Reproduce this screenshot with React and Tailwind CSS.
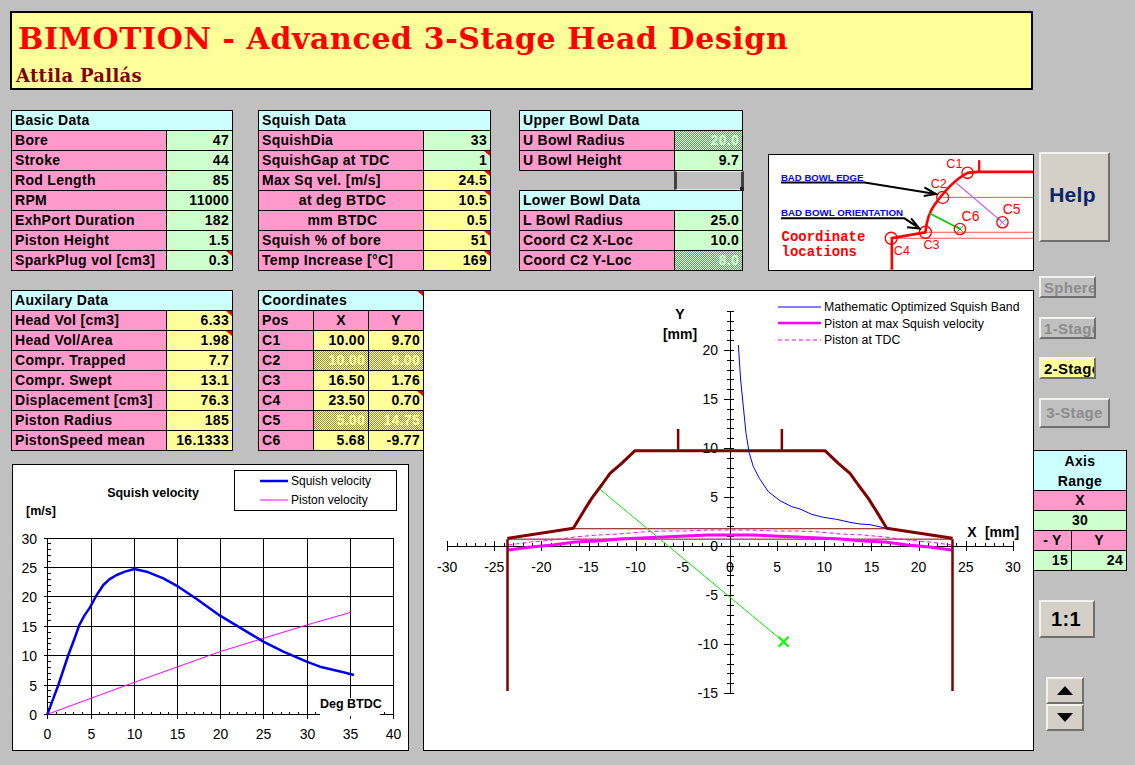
import React from 'react';

const PINK = 'bg-[#ff99cc]';
const GREEN = 'bg-[#ccffcc]';
const YELLOW = 'bg-[#ffff99]';
const DOT_GREEN = 'bg-[repeating-conic-gradient(#6f8f6f_0_25%,#ccffcc_0_50%)] bg-[length:2px_2px] text-[#ccffcc]';
const DOT_YELLOW = 'bg-[repeating-conic-gradient(#8f8f55_0_25%,#ffff99_0_50%)] bg-[length:2px_2px] text-[#ffff99]';
const BEVEL = 'border-2 border-t-[#f4f2ec] border-l-[#f4f2ec] border-b-[#707070] border-r-[#707070]';

// red comment marker in the corner of a cell
function Note() {
  return <span className="absolute top-0 right-0 w-0 h-0 border-l-[6px] border-l-transparent border-t-[5px] border-t-[#ff0000]" />;
}

function Title({ children, note }) {
  return (
    <div className="relative h-5 border-b border-black bg-[#ccffff] pl-[3px] leading-[19px]">
      {children}
      {note && <Note />}
    </div>
  );
}

function DataRow({ label, value, labelW, color, note, center }) {
  return (
    <div className="flex h-5 border-b border-black leading-[19px]">
      <div className={`${labelW} ${PINK} border-r border-black pl-[3px] whitespace-nowrap ${center ? 'text-center' : ''}`}>{label}</div>
      <div className={`relative flex-1 ${color} text-right pr-[3px]`}>
        {value}
        {note && <Note />}
      </div>
    </div>
  );
}

function BasicData() {
  const rows = [
    ['Bore', '47'],
    ['Stroke', '44'],
    ['Rod Length', '85'],
    ['RPM', '11000'],
    ['ExhPort Duration', '182'],
    ['Piston Height', '1.5'],
    ['SparkPlug vol [cm3]', '0.3', true],
  ];
  return (
    <div className="w-[222px] border-t border-x border-black">
      <Title>Basic Data</Title>
      {rows.map((r) => (
        <DataRow key={r[0]} labelW="w-[155px]" color={GREEN} label={r[0]} value={r[1]} note={r[2]} />
      ))}
    </div>
  );
}

function SquishData() {
  return (
    <div className="w-[233px] ml-[25px] border-t border-x border-black">
      <Title>Squish Data</Title>
      <DataRow labelW="w-[165px]" color={GREEN} label="SquishDia" value="33" />
      <DataRow labelW="w-[165px]" color={GREEN} label="SquishGap at TDC" value="1" note />
      <DataRow labelW="w-[165px]" color={YELLOW} label="Max Sq vel. [m/s]" value="24.5" note />
      <DataRow labelW="w-[165px]" color={YELLOW} label="at deg BTDC" value="10.5" note center />
      <DataRow labelW="w-[165px]" color={YELLOW} label="mm BTDC" value="0.5" center />
      <DataRow labelW="w-[165px]" color={YELLOW} label="Squish % of bore" value="51" note />
      <DataRow labelW="w-[165px]" color={YELLOW} label="Temp Increase [°C]" value="169" note />
    </div>
  );
}

function BowlData() {
  return (
    <div className="w-[224px] ml-[28px] flex flex-col">
      <div className="border-t border-x border-black">
        <Title>Upper Bowl Data</Title>
        <DataRow labelW="w-[155px]" color={DOT_GREEN} label="U Bowl Radius" value="20.0" />
        <DataRow labelW="w-[155px]" color={GREEN} label="U Bowl Height" value="9.7" />
      </div>
      {/* selected, empty sheet cell */}
      <div className="relative ml-auto -mr-px w-[70px] h-[20px] border-y border-x-[3px] border-y-[#e8e8e8] border-x-[#404040] bg-[#c0c0c0]">
        <span className="absolute -right-[3px] -bottom-[2px] w-[4px] h-[4px] bg-[#202020]" />
      </div>
      <div className="border-t border-x border-black">
        <Title>Lower Bowl Data</Title>
        <DataRow labelW="w-[155px]" color={GREEN} label="L Bowl Radius" value="25.0" />
        <DataRow labelW="w-[155px]" color={GREEN} label="Coord C2 X-Loc" value="10.0" />
        <DataRow labelW="w-[155px]" color={DOT_GREEN} label="Coord C2 Y-Loc" value="8.0" />
      </div>
    </div>
  );
}

function Diagram() {
  return (
    <div className="w-[266px] h-[117px] ml-[25px] mt-[44px] border border-black bg-white overflow-hidden">
      <svg viewBox="12 15 795 345" className="block w-full h-full font-normal tracking-normal">
        <g stroke="#ff5050" strokeWidth="3" fill="none">
          <path d="M535 142H810M483 247H810M382 265H810" />
        </g>
        <path d="M382 360V265L483 247C486 215 492 190 510 165C535 130 570 88 610 68L640 65H810" stroke="#ff0000" strokeWidth="8" fill="none" />
        <path d="M645 30V65" stroke="#ff0000" strokeWidth="7" />
        <path d="M575 98L715 217" stroke="#cc66ee" strokeWidth="4" />
        <path d="M495 190L587 237" stroke="#00cc00" strokeWidth="5" />
        <path d="M705 207L725 227M725 207L705 227" stroke="#cc44ee" strokeWidth="3" />
        <path d="M578 228L596 246M596 228L578 246" stroke="#00bb00" strokeWidth="3" />
        <g stroke="#ff0000" strokeWidth="4" fill="none">
          <circle cx="610" cy="68" r="17" />
          <circle cx="535" cy="142" r="18" />
          <circle cx="483" cy="247" r="18" />
          <circle cx="380" cy="265" r="18" />
          <circle cx="715" cy="217" r="17" />
          <circle cx="587" cy="237" r="17" />
        </g>
        <g fill="#ff0000" fontSize="38">
          <text x="546" y="54">C1</text>
          <text x="499" y="114">C2</text>
          <text x="477" y="297">C3</text>
          <text x="388" y="315">C4</text>
        </g>
        <g fill="#ff0000" fontSize="42">
          <text x="716" y="191">C5</text>
          <text x="592" y="214">C6</text>
        </g>
        <g fontSize="30" fontWeight="bold" fill="#0000ff">
          <text x="48" y="92" textLength="248" lengthAdjust="spacingAndGlyphs">BAD BOWL EDGE</text>
          <text x="48" y="197" textLength="368" lengthAdjust="spacingAndGlyphs">BAD BOWL ORIENTATION</text>
        </g>
        <path d="M48 97H300L505 130M480 112L515 132L478 138" stroke="#000" strokeWidth="6" fill="none" />
        <path d="M48 205H420L462 233M440 205L465 236L428 232" stroke="#000" strokeWidth="6" fill="none" />
        <g fill="#ff0000" fontSize="42" className="[font-family:'Liberation_Mono',monospace]" fontWeight="bold">
          <text x="50" y="272">Coordinate</text>
          <text x="50" y="317">locations</text>
        </g>
      </svg>
    </div>
  );
}

function AuxData() {
  const rows = [
    ['Head Vol [cm3]', '6.33', true],
    ['Head Vol/Area', '1.98', true],
    ['Compr. Trapped', '7.7'],
    ['Compr. Swept', '13.1'],
    ['Displacement [cm3]', '76.3'],
    ['Piston Radius', '185'],
    ['PistonSpeed mean', '16.1333'],
  ];
  return (
    <div className="w-[222px] ml-px border-t border-x border-black">
      <Title>Auxilary Data</Title>
      {rows.map((r) => (
        <DataRow key={r[0]} labelW="w-[155px]" color={YELLOW} label={r[0]} value={r[1]} note={r[2]} />
      ))}
    </div>
  );
}

function Coordinates() {
  const rows = [
    ['C1', '10.00', '9.70'],
    ['C2', '10.00', '8.00', true],
    ['C3', '16.50', '1.76'],
    ['C4', '23.50', '0.70', false, true],
    ['C5', '5.00', '14.75', true],
    ['C6', '5.68', '-9.77'],
  ];
  return (
    <div className="w-[165px] ml-[25px] border-t border-l border-black">
      <Title note>Coordinates</Title>
      <div className={`flex h-5 border-b border-black leading-[19px] ${PINK}`}>
        <div className="w-[55px] border-r border-black pl-[3px]">Pos</div>
        <div className="w-[55px] border-r border-black text-center">X</div>
        <div className="flex-1 text-center">Y</div>
      </div>
      {rows.map((r) => (
        <div key={r[0]} className="flex h-5 border-b border-black leading-[19px]">
          <div className={`w-[55px] ${PINK} border-r border-black pl-[3px]`}>{r[0]}</div>
          <div className={`w-[55px] border-r border-black text-right pr-[3px] ${r[3] ? DOT_YELLOW : YELLOW}`}>{r[1]}</div>
          <div className={`relative flex-1 text-right pr-[3px] ${r[3] ? DOT_YELLOW : YELLOW}`}>
            {r[2]}
            {r[4] && <Note />}
          </div>
        </div>
      ))}
    </div>
  );
}

function VelocityChart() {
  const SX = (v) => Math.round(47.3 + 8.64 * v) + 0.5;
  const SY = (v) => Math.round(714 - 5.88 * v) + 0.5;
  const five = [0, 5, 10, 15, 20, 25, 30, 35, 40];
  const ys = [0, 5, 10, 15, 20, 25, 30];
  const ones = Array.from({ length: 41 }, (_, i) => i);
  const yOnes = Array.from({ length: 31 }, (_, i) => i);
  const zoomed = (pts) => pts.map((p) => `${p[0] / 3},${p[1] / 3 + 455}`).join(' ');
  const squish = [[142, 778], [160, 730], [175, 690], [190, 645], [205, 600], [222, 555], [238, 510], [253, 482], [270, 457], [290, 420], [310, 390], [328, 373], [350, 360], [375, 350], [403, 342], [440, 350], [490, 370], [535, 395], [590, 432], [660, 482], [720, 518], [790, 560], [850, 590], [920, 620], [960, 635], [1030, 652], [1062, 660]];
  const piston = [[142, 778], [403, 682], [660, 590], [790, 550], [920, 510], [1052, 472]];
  return (
    <div className="w-[397px] h-[287px] ml-[2px] mt-[13px] border border-black bg-white">
      <svg viewBox="13 465 395 285" className="block w-full h-full font-normal tracking-normal">
        <g stroke="#000" shapeRendering="crispEdges">
          {five.map((v) => <line key={v} x1={SX(v)} x2={SX(v)} y1={SY(30)} y2={SY(0) + 4} />)}
          {ys.map((v) => <line key={v} x1={SX(0) - 4} x2={SX(40)} y1={SY(v)} y2={SY(v)} />)}
          {ones.map((v) => <line key={v} x1={SX(v)} x2={SX(v)} y1={SY(0) - 3} y2={SY(0)} />)}
          {yOnes.map((v) => <line key={v} x1={SX(0)} x2={SX(0) + 3} y1={SY(v)} y2={SY(v)} />)}
        </g>
        <rect x="320" y="698" width="60" height="18" fill="#fff" />
        <polyline points={zoomed(piston)} fill="none" stroke="#ff00ff" strokeWidth="1" />
        <polyline points={zoomed(squish)} fill="none" stroke="#0000ee" strokeWidth="2.5" strokeLinejoin="round" />
        <g fontSize="14" textAnchor="end">
          {ys.map((v) => <text key={v} x="37" y={SY(v) + 5}>{v}</text>)}
        </g>
        <g fontSize="14" textAnchor="middle">
          {five.map((v) => <text key={v} x={SX(v)} y="739">{v}</text>)}
        </g>
        <g fontSize="12.5" fontWeight="bold">
          <text x="153" y="497" textAnchor="middle">Squish velocity</text>
          <text x="26" y="515">[m/s]</text>
          <text x="320" y="708">Deg BTDC</text>
        </g>
        <rect x="234.5" y="470.5" width="162" height="40" fill="#fff" stroke="#000" shapeRendering="crispEdges" />
        <line x1="260" x2="288" y1="481" y2="481" stroke="#0000ee" strokeWidth="2.5" />
        <line x1="260" x2="288" y1="500" y2="500" stroke="#ff00ff" />
        <g fontSize="12">
          <text x="291" y="485">Squish velocity</text>
          <text x="291" y="504">Piston velocity</text>
        </g>
      </svg>
    </div>
  );
}

function HeadChart() {
  const X = (v) => 730 + 9.43 * v;
  const Y = (v) => 546 - 9.8 * v;
  const px = (v) => Math.round(v) + 0.5;
  const xMajor = [-30, -25, -20, -15, -10, -5, 0, 5, 10, 15, 20, 25, 30];
  const xMinor = Array.from({ length: 61 }, (_, i) => i - 30);
  const yMajor = [-15, -10, -5, 0, 5, 10, 15, 20];
  const yMinor = Array.from({ length: 40 }, (_, i) => i - 15);
  // right half of the head profile, left half is its mirror
  const right = [[285, 482], [325, 520], [360, 550], [385, 585], [415, 625], [440, 665], [470, 715], [668, 745]].map((p) => [730 + p[0] / 3, 290 + p[1] / 3]);
  const head = [...right.slice().reverse().map((p) => [1460 - p[0], p[1]]), ...right];
  const headPts = head.map((p) => p.join(',')).join(' ');
  const blue = [[25, 165], [32, 270], [40, 350], [48, 430], [58, 490], [70, 530], [88, 565], [115, 605], [150, 632], [185, 650], [210, 657], [245, 673], [280, 682], [320, 688], [360, 697], [390, 702], [420, 704], [470, 715]].map((p) => `${730 + p[0] / 3},${290 + p[1] / 3}`).join(' ');
  const steps = Array.from({ length: 21 }, (_, i) => -23.5 + i * 2.35);
  const curve = (top, drop) => steps.map((v) => `${X(v)},${Math.round(Y(top - drop * (v / 23.5) ** 2))}`).join(' ');
  const wall = px(X(23.5));
  return (
    <div className="w-[611px] h-[461px] border border-black bg-white">
      <svg viewBox="424 291 609 459" className="block w-full h-full font-normal tracking-normal">
        <g stroke="#000" shapeRendering="crispEdges">
          <line x1={px(X(-30))} x2={px(X(30))} y1="546.5" y2="546.5" />
          <line x1="730.5" x2="730.5" y1={px(Y(24))} y2={px(Y(-15))} />
          {xMinor.map((v) => <line key={v} x1={px(X(v))} x2={px(X(v))} y1="543" y2="546" />)}
          {xMajor.map((v) => <line key={v} x1={px(X(v))} x2={px(X(v))} y1="541" y2="551" />)}
          {yMinor.map((v) => <line key={v} x1="727" x2="734" y1={px(Y(v))} y2={px(Y(v))} />)}
          {yMajor.map((v) => <line key={v} x1="724" x2="734" y1={px(Y(v))} y2={px(Y(v))} />)}
        </g>
        <g fontSize="14" textAnchor="middle" fill="#000">
          {xMajor.map((v) => <text key={v} x={X(v)} y="572">{v}</text>)}
        </g>
        <g fontSize="14" textAnchor="end" fill="#000">
          {yMajor.map((v) => <text key={v} x="718" y={Y(v) + 5}>{v}</text>)}
        </g>
        <path d={`M${X(-16.5)} ${Y(1.76)}H${X(16.5)}M${X(-23.5)} ${Y(0.7)}H${X(23.5)}`} stroke="#800000" strokeWidth="1" fill="none" />
        <polyline points={curve(1.63, 1.55)} fill="none" stroke="#ff00ff" strokeWidth="1" strokeDasharray="4 3" />
        <polyline points={curve(1.1, 1.5)} fill="none" stroke="#ff00ff" strokeWidth="3" />
        <polyline points={headPts} fill="none" stroke="#800000" strokeWidth="3" strokeLinejoin="round" />
        <path d={`M${wall} 691V${Y(0.7)}M${1460 - wall} 691V${Y(0.7)}`} stroke="#800000" strokeWidth="2.5" />
        <path d={`M${X(-5.5)} 450V429M${X(5.5)} 450V429`} stroke="#800000" strokeWidth="2.5" />
        <polyline points={blue} fill="none" stroke="#0000ff" strokeWidth="1" />
        <line x1="599.7" y1="489" x2={X(5.68)} y2={Y(-9.77)} stroke="#00ee00" strokeWidth="1" />
        <path d={`M${X(5.68) - 5} ${Y(-9.77) - 5}l10 10m0 -10l-10 10`} stroke="#00ff00" strokeWidth="2" />
        <g fontSize="14" fontWeight="bold" textAnchor="middle">
          <text x="680" y="319">Y</text>
          <text x="680" y="339">[mm]</text>
          <text x="972" y="537">X</text>
          <text x="1002" y="537">[mm]</text>
        </g>
        <line x1="778" x2="821" y1="307" y2="307" stroke="#0000ff" />
        <line x1="778" x2="821" y1="323" y2="323" stroke="#ff00ff" strokeWidth="2.5" />
        <line x1="778" x2="821" y1="340" y2="340" stroke="#ff00ff" strokeDasharray="4 3" />
        <g fontSize="12.3">
          <text x="824" y="311">Mathematic Optimized Squish Band</text>
          <text x="824" y="328">Piston at max Squish velocity</text>
          <text x="824" y="344">Piston at TDC</text>
        </g>
      </svg>
    </div>
  );
}

function AxisRange() {
  return (
    <div className="w-[93px] mt-[22px] border-t border-r border-black text-center">
      <div className="h-10 border-b border-black bg-[#ccffff] leading-5">Axis<br />Range</div>
      <div className={`h-5 border-b border-black leading-[19px] ${PINK}`}>X</div>
      <div className={`h-5 border-b border-black leading-[19px] ${GREEN}`}>30</div>
      <div className={`flex h-5 border-b border-black leading-[19px] ${PINK}`}>
        <div className="w-[38px] border-r border-black">- Y</div>
        <div className="flex-1">Y</div>
      </div>
      <div className={`flex h-5 border-b border-black leading-[19px] text-right ${GREEN}`}>
        <div className="w-[38px] border-r border-black pr-[3px]">15</div>
        <div className="flex-1 pr-[3px]">24</div>
      </div>
    </div>
  );
}

function SideButtons() {
  return (
    <div className="w-[101px] flex flex-col">
      <button className={`${BEVEL} ml-[5px] mt-[42px] w-[71px] h-[90px] pr-1 pb-1 bg-[#d4d0c8] text-[21px] font-bold text-[#0a246a]`}>Help</button>
      <div className={`${BEVEL} ml-[5px] mt-[34px] w-[57px] h-[22px] bg-[#c0c0c0] text-[15px] leading-[19px] text-[#8c8c8c] pl-[3px] overflow-hidden whitespace-nowrap`}>Sphere</div>
      <div className={`${BEVEL} ml-[5px] mt-[19px] w-[57px] h-[22px] bg-[#c0c0c0] text-[15px] leading-[19px] text-[#8c8c8c] pl-[3px] overflow-hidden whitespace-nowrap`}>1-Stage</div>
      <div className={`${BEVEL} ml-[5px] mt-[18px] w-[57px] h-[22px] bg-[#ffff99] text-[15px] leading-[19px] text-black pl-[3px] overflow-hidden whitespace-nowrap`}>2-Stage</div>
      <div className={`${BEVEL} ml-[5px] mt-[19px] w-[71px] h-[30px] bg-[#c0c0c0] text-[15px] leading-[26px] text-[#8c8c8c] text-center overflow-hidden whitespace-nowrap`}>3-Stage</div>
      <AxisRange />
      <button className={`${BEVEL} ml-[5px] mt-[29px] w-[56px] h-[38px] pr-0.5 bg-[#d4d0c8] text-[20px] font-bold text-black`}>1:1</button>
      <div className="ml-[12px] mt-[39px] w-[38px] flex flex-col">
        <button className={`${BEVEL} h-[27px] bg-[#d4d0c8] flex items-center justify-center`}>
          <svg width="16" height="9" viewBox="0 0 16 9"><path d="M8 0L16 9H0Z" fill="#000" /></svg>
        </button>
        <button className={`${BEVEL} h-[27px] bg-[#d4d0c8] flex items-center justify-center`}>
          <svg width="16" height="9" viewBox="0 0 16 9"><path d="M0 0H16L8 9Z" fill="#000" /></svg>
        </button>
      </div>
    </div>
  );
}

export default function App() {
  return (
    <div className="w-[1135px] h-[765px] overflow-hidden bg-[#c0c0c0] pt-[11px] pl-[10px] text-black text-[14px] tracking-[0.3px] font-bold [font-family:'Liberation_Sans',Arial,sans-serif]">
      {/* header */}
      <div className="w-[1023px] h-[79px] border-2 border-black bg-[#ffff99] pl-[6px] pt-[6px] [font-family:'DejaVu_Serif',serif]">
        <div className="text-[30px] tracking-[0.6px] leading-[40px] text-[#ff0000] whitespace-nowrap">BIMOTION - Advanced 3-Stage Head Design</div>
        <div className="text-[18px] tracking-[0.3px] leading-[20px] mt-[7px] -ml-[2px] text-[#800000]">Attila Pallás</div>
      </div>

      <div className="flex mt-[20px]">
        <div className="w-[1024px] flex flex-col">
          <div className="flex pl-px h-[161px]">
            <BasicData />
            <SquishData />
            <BowlData />
            <Diagram />
          </div>
          <div className="flex mt-[19px]">
            <div className="w-[413px] flex flex-col">
              <div className="flex">
                <AuxData />
                <Coordinates />
              </div>
              <VelocityChart />
            </div>
            <HeadChart />
          </div>
        </div>
        <SideButtons />
      </div>
    </div>
  );
}
